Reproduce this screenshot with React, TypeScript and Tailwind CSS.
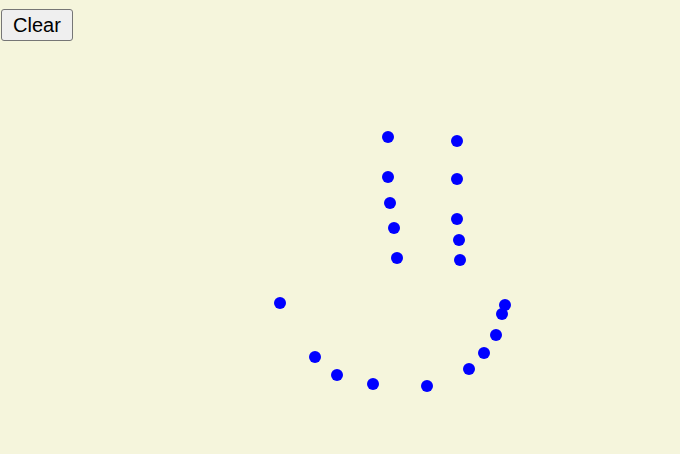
import React from 'react';

// Points placed on the drawing canvas (center x, y)
const points: [number, number][] = [
  [388, 137], [457, 141],
  [388, 177], [457, 179],
  [390, 203], [457, 219],
  [394, 228], [459, 240],
  [397, 258], [460, 260],
  [280, 303], [505, 305], [502, 314], [496, 335], [484, 353], [469, 369],
  [315, 357], [337, 375], [373, 384], [427, 386],
];

export default function App() {
  return (
    <div className="relative w-full h-[454px] overflow-hidden bg-[#f5f5dc] font-['Liberation_Sans',Arial,sans-serif]">
      {/* Toolbar */}
      <div className="pt-[9px] pl-px">
        <button className="h-8 px-[11px] border border-[#767676] rounded-[3px] bg-[#efefef] text-[20px] leading-[23px] text-black">
          Clear
        </button>
      </div>

      {/* Canvas dots */}
      {points.map(([x, y], i) => (
        <span
          key={i}
          className="absolute w-3 h-3 rounded-full bg-[#0000ff]"
          style={{ left: x - 6, top: y - 6 }}
        />
      ))}
    </div>
  );
}
